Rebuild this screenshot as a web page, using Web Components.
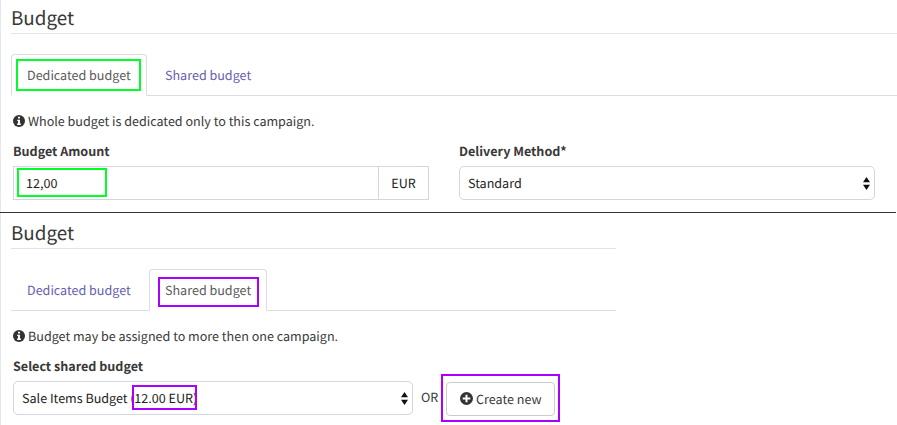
<!DOCTYPE html>
<html lang="en"><head><meta charset="utf-8"><title>Budget</title>
<style>
html,body{margin:0;background:#fff}
body{width:897px;height:425px;overflow:hidden;font:12.57px/20px "Noto Sans CJK SC","Noto Sans",sans-serif;text-rendering:geometricPrecision;color:#383838;--line:#ddd;--field:#d2d6e0}
.split{height:1px;width:896px;background:#333}
.row{display:flex}
</style></head><body>
<budget-panel heading="Budget" style="height:212px">
  <budget-tabs slot="tabs"><budget-tab active><mark-box style="--x:-11px;--y:-6px;--w:125px;--h:32px;--c:#00ff26">Dedicated budget</mark-box></budget-tab><budget-tab style="--tw:86px">Shared budget</budget-tab></budget-tabs>
  <info-line>Whole budget is dedicated only to this campaign.</info-line>
  <div class="row" style="gap:30px">
    <form-field label="Budget Amount" style="width:416px"><money-input unit="EUR"><mark-box style="--x:-9px;--y:-5px;--w:90px;--h:29px;--c:#00ff26">12,00</mark-box></money-input></form-field>
    <form-field label="Delivery Method*" style="width:416px"><select-box>Standard</select-box></form-field>
  </div>
</budget-panel>
<div class="split"></div>
<budget-panel heading="Budget" style="height:212px;--top:2px;--rule:605px">
  <budget-tabs slot="tabs"><budget-tab>Dedicated budget</budget-tab><budget-tab active style="--tw:86px"><mark-box style="--x:-7px;--y:-3px;--w:101px;--h:30px;--c:#a0f">Shared budget</mark-box></budget-tab></budget-tabs>
  <info-line>Budget may be assigned to more then one campaign.</info-line>
  <div class="row">
    <form-field label="Select shared budget" style="width:400px"><select-box>Sale Items Budget (<mark-box style="--x:-2.500px;--y:-3px;--w:65px;--h:25px;--c:#a0f;margin-left:-.3px">12.00 EUR</mark-box>)</select-box></form-field>
    <span style="margin:41px 0 0 8px;width:25px;white-space:nowrap">OR</span>
    <mark-box style="margin-top:36px;--x:-5px;--y:-8px;--w:119px;--h:48px;--c:#a0f"><create-button>Create new</create-button></mark-box>
  </div>
</budget-panel>
<script>
function define(name, markup){
  customElements.define(name, class extends HTMLElement{
    constructor(){
      super();
      const t=document.createElement('template');
      t.innerHTML=markup;
      const root=this.attachShadow({mode:'open'});
      root.append(t.content.cloneNode(true));
      root.querySelectorAll('[data-attr]').forEach(e=>e.textContent=this.getAttribute(e.dataset.attr));
    }
  });
}
define('budget-panel',`<style>
:host{display:block;box-sizing:border-box;border-left:1px solid #e4e6f0;padding:var(--top,0) 0 0 10px;overflow:hidden}
h2{margin:0;height:33px;font-size:18.8px;line-height:36px;font-weight:400;border-bottom:1px solid #e3e3e3;width:var(--rule,100%)}
.tabs{margin-top:20px;width:var(--rule,100%)}
.body{padding-left:2px}
</style><h2 data-attr="heading"></h2><div class="tabs"><slot name="tabs"></slot></div><div class="body"><slot></slot></div>`);
define('budget-tabs',`<style>:host{display:flex;gap:2px;height:41px;border-bottom:1px solid var(--line)}</style><slot></slot>`);
define('budget-tab',`<style>
:host{display:block;box-sizing:border-box;height:42px;width:calc(var(--tw,104px) + 32px);padding:10px 15px;border:1px solid transparent;white-space:nowrap;color:#665eb0}
:host([active]){border-color:var(--line);border-bottom-color:#fff;border-radius:4px 4px 0 0;background:#fff;color:#5a5a5a}
</style><slot></slot>`);
define('mark-box',`<style>
:host{display:inline-block;position:relative}
i{position:absolute;left:var(--x);top:var(--y);width:var(--w);height:var(--h);box-sizing:border-box;border:2px solid var(--c);pointer-events:none}
</style><slot></slot><i></i>`);
define('info-line',`<style>
:host{display:flex;align-items:center;gap:3px;margin-top:15px;height:20px;white-space:nowrap}
svg{display:block;width:12px;height:12px}
</style><svg viewBox="0 0 12 12"><circle cx="6" cy="6" r="6" fill="#333"/><path d="M5 1.800h2v1.700H5zM4.200 4.700H7v3.800h.9v1.400H4.100V8.500H5V6h-.8z" fill="#fff"/></svg><span><slot></slot></span>`);
define('form-field',`<style>
:host{display:block;margin-top:10px}
label{display:block;height:25px;line-height:20px;font-weight:700;white-space:nowrap}
</style><label data-attr="label"></label><slot></slot>`);
define('money-input',`<style>
:host{display:flex;box-sizing:border-box;height:34px;border:1px solid var(--field);color:#222}
.v{flex:1;padding:6px 12px}.u{width:49px;line-height:32px;text-align:center;border-left:1px solid var(--field)}
</style><div class="v"><slot></slot></div><div class="u" data-attr="unit"></div>`);
define('select-box',`<style>
:host{display:flex;box-sizing:border-box;height:34px;border:1px solid var(--field);border-radius:5px;padding:6px 4px 6px 8px;justify-content:space-between;align-items:center;color:#222}
span{white-space:nowrap}svg{width:7px;height:13px}
</style><span><slot></slot></span><svg viewBox="0 0 7 13"><path d="M3.500 0 7 5.300H0zM0 7.700h7L3.500 13z" fill="#111"/></svg>`);
define('create-button',`<style>
:host{display:flex;box-sizing:border-box;width:109px;height:34px;border:1px solid #ccc;border-radius:4px;padding:0 0 0 13px;align-items:center;gap:3px;white-space:nowrap}
svg{width:13px;height:13px;margin-top:-2px}
</style><svg viewBox="0 0 13 13"><circle cx="6.500" cy="6.500" r="6.500" fill="#333"/><path d="M5.500 2.700h2v2.800h2.800v2H7.500v2.800h-2V7.500H2.700v-2h2.800z" fill="#fff"/></svg><span><slot></slot></span>`);
</script></body></html>
